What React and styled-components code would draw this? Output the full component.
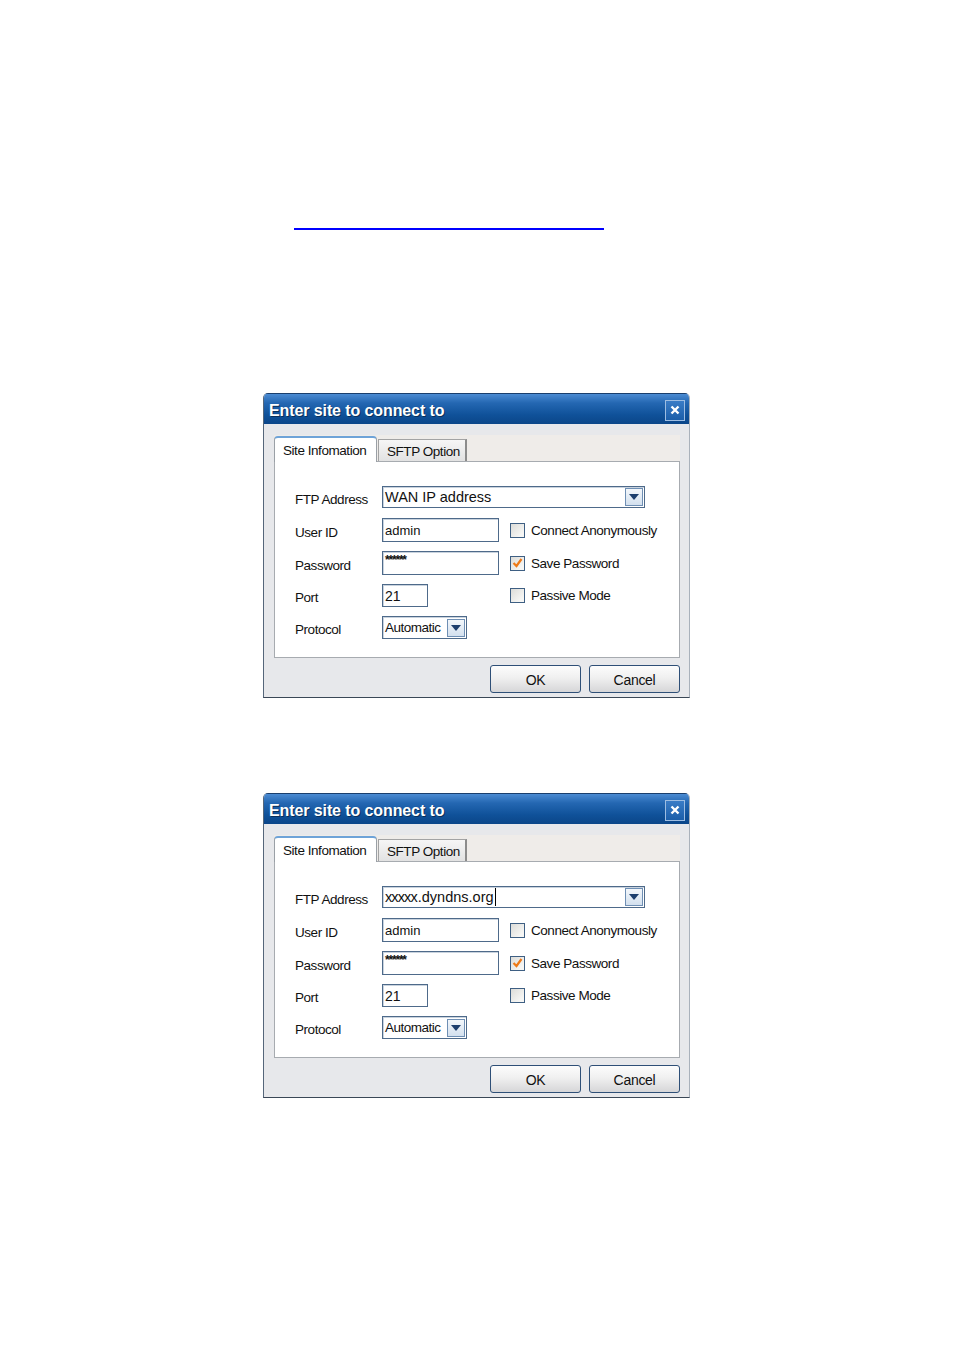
import React from 'react';
import styled, { createGlobalStyle } from 'styled-components';

const GlobalStyle = createGlobalStyle`
  html, body {
    margin: 0;
    padding: 0;
    background: #ffffff;
  }
  body {
    font-family: "Liberation Sans", Arial, sans-serif;
    color: #000;
  }
`;

const Page = styled.div`
  width: 954px;
  min-height: 1350px;
  display: flex;
  flex-direction: column;
  align-items: flex-start;
`;

const LinkLine = styled.div`
  margin: 228px 0 0 294px;
  width: 310px;
  height: 2px;
  background: #0000ff;
`;

const Dialog = styled.div`
  margin: ${p => p.$top}px 0 0 263px;
  width: 427px;
  box-sizing: border-box;
  background: #e7e8eb;
  border-left: 1px solid #55667a;
  border-right: 1px solid #a9b1bb;
  border-bottom: 1px solid #3a4756;
  border-radius: 5px 5px 0 0;
  overflow: hidden;
`;

const TitleBar = styled.div`
  height: 31px;
  display: flex;
  align-items: center;
  justify-content: space-between;
  padding: 0 4px 0 5px;
  background: linear-gradient(#4b8bd2 0%, #2467b2 30%, #0f5199 70%, #0b4689 100%);
  border-top: 1px solid #1a3f6e;
  box-sizing: border-box;
`;

const Title = styled.span`
  color: #fff;
  font-weight: bold;
  font-size: 16px;
  letter-spacing: -0.1px;
  text-shadow: 1px 1px 0 #0a2f5a;
  padding-top: 4px;
`;

const CloseButton = styled.div`
  width: 18px;
  height: 19px;
  border: 1px solid #9dbde2;
  display: flex;
  align-items: center;
  justify-content: center;
  margin-top: 2px;
  background: linear-gradient(#3a7cc6, #1b5ea9);
`;

const Body = styled.div`
  padding: 11px 9px 4px 10px;
`;

const TabStrip = styled.div`
  display: flex;
  align-items: flex-end;
  height: 26px;
  background: #efece9;
`;

const Tab = styled.div`
  box-sizing: border-box;
  font-size: 13.5px;
  letter-spacing: -0.45px;
  display: flex;
  align-items: center;
  color: #111;
  ${p => p.$active ? `
    height: 26px;
    width: 103px;
    padding-left: 8px;
    background: #fff;
    border: 1px solid #9aa0a6;
    border-top: 2px solid #6ea3d8;
    border-bottom: none;
    border-radius: 4px 4px 0 0;
    margin-bottom: -1px;
    position: relative;
    z-index: 1;
  ` : `
    height: 22px;
    width: 89px;
    padding-left: 8px;
    padding-top: 2px;
    background: linear-gradient(#f6f6f6, #e2e2e2);
    border: 1px solid #a3a3a3;
    border-right: 2px solid #8c8c8c;
    border-bottom: none;
    margin-left: 1px;
  `}
`;

const Panel = styled.div`
  box-sizing: border-box;
  height: 197px;
  background: #fff;
  border: 1px solid #a7abb0;
  padding: 23px 0 0 20px;
  display: grid;
  grid-template-columns: 87px 128px 1fr;
  grid-template-rows: 24px 24px 24px 23px 23px;
  row-gap: 9px;
  align-items: center;
`;

const Label = styled.span`
  font-size: 13.5px;
  letter-spacing: -0.45px;
  padding-top: 4px;
  color: #111;
`;

const Field = styled.div`
  box-sizing: border-box;
  width: ${p => p.$w}px;
  height: ${p => p.$h}px;
  border: 1px solid #4e6a8a;
  box-shadow: inset 1px 1px 0 #c9d3de;
  background: #fff;
  display: flex;
  align-items: ${p => p.$top ? 'flex-start' : 'center'};
  justify-content: space-between;
  padding: 0 1px 0 2px;
  font-size: 13px;
  color: #111;
  ${p => p.$span ? 'grid-column: 2 / 4;' : ''}
`;

const FieldText = styled.span`
  font-size: ${p => p.$size || 13}px;
  letter-spacing: ${p => p.$ls || 0}px;
  white-space: nowrap;
  display: flex;
  align-items: center;
`;

const Masked = styled.span`
  font-size: 12px;
  line-height: 12px;
  letter-spacing: -1.2px;
  padding-top: 2px;
  font-weight: bold;
`;

const Squash = styled.span`
  letter-spacing: -0.9px;
  margin-right: 1px;
`;

const Caret = styled.span`
  display: inline-block;
  width: 1px;
  height: 18px;
  background: #000;
  margin-left: 1px;
`;

const DropButton = styled.div`
  box-sizing: border-box;
  width: 18px;
  height: 18px;
  border: 1px solid #6f8fb4;
  background: linear-gradient(#f3f7fb, #d3e0ee);
  display: flex;
  align-items: center;
  justify-content: center;
`;

const CheckRow = styled.div`
  display: flex;
  align-items: center;
  gap: 6px;
`;

const CheckBox = styled.div`
  box-sizing: border-box;
  width: 15px;
  height: 15px;
  border: 1px solid #3e5f83;
  background: linear-gradient(135deg, #dcdcd8, #f6f6f4 80%);
  display: flex;
  align-items: center;
  justify-content: center;
`;

const CheckText = styled.span`
  font-size: 13.5px;
  letter-spacing: -0.45px;
  color: #111;
`;

const ButtonRow = styled.div`
  display: flex;
  justify-content: flex-end;
  gap: 8px;
  margin-top: 7px;
`;

const PushButton = styled.button`
  box-sizing: border-box;
  width: 91px;
  height: 28px;
  border: 1px solid #2e4f77;
  border-radius: 3px;
  background: linear-gradient(#fcfcfc 0%, #f0f0f0 45%, #d6d6d8 100%);
  font-family: "Liberation Sans", Arial, sans-serif;
  font-size: 14px;
  letter-spacing: -0.3px;
  color: #111;
  padding: 2px 0 0;
`;

const Arrow = () => (
  <svg width="10" height="6" viewBox="0 0 10 6">
    <path d="M0 0h10L5 6z" fill="#1d3f6e" />
  </svg>
);

const Tick = () => (
  <svg width="11" height="10" viewBox="0 0 11 10">
    <path d="M1.5 5l3 3 5-7" fill="none" stroke="#ee7a18" strokeWidth="2.2" />
  </svg>
);

const Check = ({ checked, children }) => (
  <CheckRow>
    <CheckBox>{checked && <Tick />}</CheckBox>
    <CheckText>{children}</CheckText>
  </CheckRow>
);

const SiteDialog = ({ top, address }) => (
  <Dialog $top={top}>
    <TitleBar>
      <Title>Enter site to connect to</Title>
      <CloseButton>
        <svg width="10" height="10" viewBox="0 0 10 10">
          <path d="M1.5 1.5l7 7M8.5 1.5l-7 7" stroke="#fff" strokeWidth="2.4" />
        </svg>
      </CloseButton>
    </TitleBar>
    <Body>
      <TabStrip>
        <Tab $active>Site Infomation</Tab>
        <Tab>SFTP Option</Tab>
      </TabStrip>
      <Panel>
        <Label>FTP Address</Label>
        <Field $w={263} $h={22} $span>
          {address}
          <DropButton><Arrow /></DropButton>
        </Field>

        <Label>User ID</Label>
        <Field $w={117} $h={24}><FieldText>admin</FieldText></Field>
        <Check>Connect Anonymously</Check>

        <Label>Password</Label>
        <Field $w={117} $h={24} $top><Masked>******</Masked></Field>
        <Check checked>Save Password</Check>

        <Label>Port</Label>
        <Field $w={46} $h={23}><FieldText $size={14}>21</FieldText></Field>
        <Check>Passive Mode</Check>

        <Label>Protocol</Label>
        <Field $w={85} $h={23}>
          <FieldText $size={13.5} $ls={-0.5}>Automatic</FieldText>
          <DropButton><Arrow /></DropButton>
        </Field>
      </Panel>
      <ButtonRow>
        <PushButton>OK</PushButton>
        <PushButton>Cancel</PushButton>
      </ButtonRow>
    </Body>
  </Dialog>
);

export default function App() {
  return (
    <Page>
      <GlobalStyle />
      <LinkLine />
      <SiteDialog
        top={163}
        address={<FieldText $size={14.5}>WAN IP address</FieldText>}
      />
      <SiteDialog
        top={95}
        address={
          <FieldText $size={14.5}>
            <Squash>xxxxx</Squash>.dyndns.org<Caret />
          </FieldText>
        }
      />
    </Page>
  );
}
